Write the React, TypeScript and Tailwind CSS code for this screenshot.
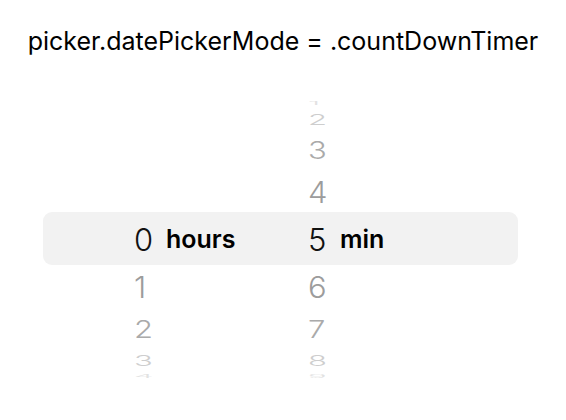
import React from 'react';

const R = 140;
const STEP = 0.355;

// height of the slot a row takes on the wheel, and how flat its text gets
const rowHeight = (k: number) => {
  const a = Math.abs(k);
  if (a === 0) return 2 * R * Math.sin(STEP / 2);
  return R * (Math.sin((a + 0.5) * STEP) - Math.sin((a - 0.5) * STEP));
};

const shades = ['#111111', '#9c9c9c', '#aaaaaa', '#cecece', '#e2e2e2'];

const Wheel = ({ value, label, empty }: { value: number; label: string; empty?: boolean }) => {
  const offsets = [-4, -3, -2, -1, 0, 1, 2, 3, 4];
  return (
    <div className="flex flex-col">
      {offsets.map((k) => {
        const n = value + k;
        const show = !(empty && n < 0) && n >= 0;
        return (
          <div key={k} className="flex items-center" style={{ height: rowHeight(k) }}>
            <span
              className="w-[32px] text-[31px] leading-none font-light"
              style={{ color: shades[Math.abs(k)], transform: `scaleY(${Math.cos(k * STEP)})` }}
            >
              {show ? n : ''}
            </span>
            {k === 0 && <span className="text-[25px] leading-none font-semibold text-black">{label}</span>}
          </div>
        );
      })}
    </div>
  );
};

export default function App() {
  return (
    <div className="w-[566px] h-[420px] bg-white font-['Inter','Liberation_Sans',sans-serif] overflow-hidden">
      <div className="pt-[26px] text-center text-[25px] leading-[30px] text-black">
        picker.datePickerMode = .countDownTimer
      </div>
      <div className="mt-[44px] grid">
        <div className="col-start-1 row-start-1 self-center ml-[43px] mr-[48px] mt-[-2px] h-[53px] rounded-[9px] bg-[#f2f2f2]"></div>
        <div className="col-start-1 row-start-1 flex pl-[134px]">
          <div className="w-[174px]">
            <Wheel value={0} label="hours" empty />
          </div>
          <Wheel value={5} label="min" />
        </div>
      </div>
    </div>
  );
}
